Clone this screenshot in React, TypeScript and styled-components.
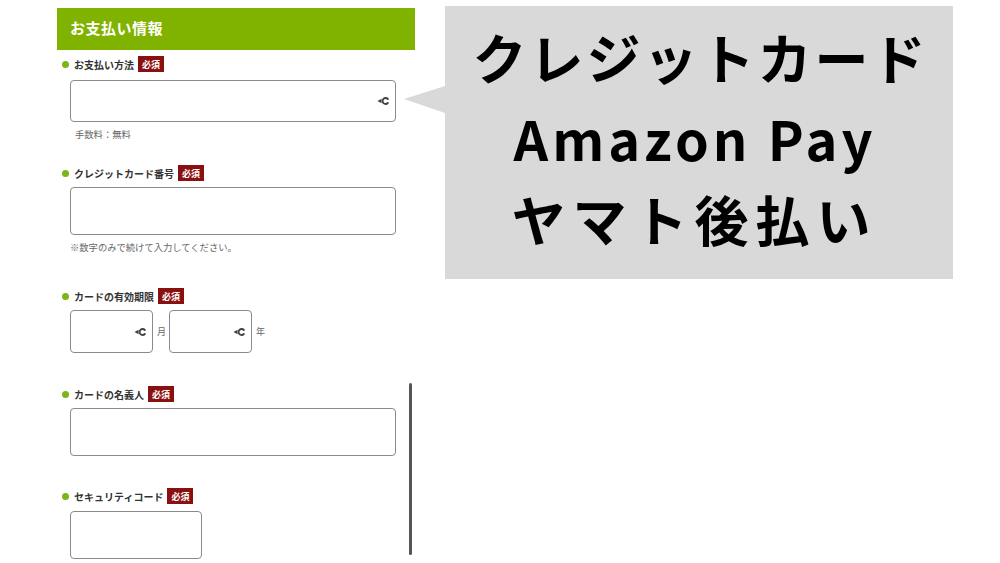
import React from "react";
import styled, { createGlobalStyle } from "styled-components";

const Global = createGlobalStyle`
  html, body { margin: 0; padding: 0; background: #fff; }
  body { font-family: "Noto Sans CJK JP", "Noto Sans", sans-serif; }
  #root { width: 1000px; height: 563px; overflow: hidden; }
`;

const Page = styled.div`
  display: flex;
  align-items: flex-start;
  width: 1000px;
  height: 563px;
`;

const Panel = styled.div`
  position: relative;
  width: 358px;
  margin: 8px 0 0 57px;
  display: flex;
  flex-direction: column;
`;

const Header = styled.div`
  height: 42px;
  background: #80b300;
  color: #fff;
  font-weight: 700;
  font-size: 15px;
  display: flex;
  align-items: center;
  padding-left: 13px;
  padding-bottom: 3px;
  box-sizing: border-box;
  letter-spacing: 0.5px;
`;

const Group = styled.div<{ $top: number }>`
  display: flex;
  flex-direction: column;
  margin-top: ${(p) => p.$top}px;
`;

const LabelRow = styled.div`
  display: flex;
  align-items: center;
  height: 16px;
  padding-left: 5px;
  gap: 4px;
`;

const Dot = styled.span`
  width: 7px;
  height: 7px;
  border-radius: 50%;
  background: #7cb518;
  margin-right: 1px;
`;

const LabelText = styled.span`
  font-size: 10px;
  font-weight: 700;
  color: #333;
`;

const Badge = styled.span`
  background: #8a1010;
  color: #fff;
  font-size: 9px;
  font-weight: 700;
  height: 16px;
  padding: 0 4px;
  display: flex;
  align-items: center;
`;

const Field = styled.div<{ $w: number; $h: number; $mt?: number }>`
  box-sizing: border-box;
  width: ${(p) => p.$w}px;
  height: ${(p) => p.$h}px;
  border: 1.5px solid #8a8a8a;
  border-radius: 4px;
  background: #fff;
  margin-left: 13px;
  margin-top: ${(p) => p.$mt ?? 0}px;
  display: flex;
  align-items: center;
  justify-content: flex-end;
  padding-right: 6px;
`;

const Note = styled.div<{ $pl?: number }>`
  font-size: 9.3px;
  color: #666;
  margin-top: 6px;
  padding-left: ${(p) => p.$pl ?? 18}px;
  height: 12px;
  line-height: 12px;
`;

const DateRow = styled.div`
  display: flex;
  align-items: center;
  margin-top: 6px;
  margin-left: 13px;
`;

const Unit = styled.span`
  font-size: 9px;
  color: #666;
  margin: 0 3px 0 4px;
`;

const DateSelect = styled(Field)`
  margin-left: 0;
`;

const Scrollbar = styled.div`
  position: absolute;
  left: 352px;
  top: 375px;
  width: 3px;
  height: 172px;
  background: #555;
  border-radius: 2px;
`;

const Callout = styled.div`
  position: relative;
  box-sizing: border-box;
  margin: 6px 0 0 30px;
  width: 508px;
  height: 273px;
  padding-top: 10px;
  background: #d9d9d9;
  display: flex;
  flex-direction: column;
  align-items: center;
  &::before {
    content: "";
    position: absolute;
    left: -41px;
    top: 80px;
    border-style: solid;
    border-width: 13px 41px 14px 0;
    border-color: transparent #d9d9d9 transparent transparent;
  }
`;

const BigLine = styled.div<{ $ls: number; $shift?: number }>`
  font-family: "Noto Sans CJK JP", "Noto Sans", sans-serif;
  font-weight: 700;
  font-size: 54px;
  line-height: 81px;
  color: #000;
  letter-spacing: ${(p) => p.$ls}px;
  margin-right: ${(p) => (p.$shift ?? 0) * 2 - p.$ls}px;
`;

const SelectIcon = () => (
  <svg width="12" height="10" viewBox="0 0 12 10">
    <path d="M0.5 5 L4.5 2.8 L4.5 7.2 Z" fill="#444" />
    <path d="M10.8 3 A3 3 0 1 0 10.8 7" stroke="#444" strokeWidth="1.9" fill="none" strokeLinecap="round" />
  </svg>
);

export default function App() {
  return (
    <>
      <Global />
      <Page>
        <Panel>
          <Header>お支払い情報</Header>
          <Group $top={6}>
            <LabelRow>
              <Dot />
              <LabelText>お支払い方法</LabelText>
              <Badge>必須</Badge>
            </LabelRow>
            <Field $w={326} $h={42} $mt={8}>
              <SelectIcon />
            </Field>
            <Note>手数料：無料</Note>
          </Group>
          <Group $top={25}>
            <LabelRow>
              <Dot />
              <LabelText>クレジットカード番号</LabelText>
              <Badge>必須</Badge>
            </LabelRow>
            <Field $w={326} $h={48} $mt={6} />
            <Note $pl={13}>※数字のみで続けて入力してください。</Note>
          </Group>
          <Group $top={35}>
            <LabelRow>
              <Dot />
              <LabelText>カードの有効期限</LabelText>
              <Badge>必須</Badge>
            </LabelRow>
            <DateRow>
              <DateSelect $w={83} $h={43}>
                <SelectIcon />
              </DateSelect>
              <Unit>月</Unit>
              <DateSelect $w={83} $h={43}>
                <SelectIcon />
              </DateSelect>
              <Unit>年</Unit>
            </DateRow>
          </Group>
          <Group $top={33}>
            <LabelRow>
              <Dot />
              <LabelText>カードの名義人</LabelText>
              <Badge>必須</Badge>
            </LabelRow>
            <Field $w={326} $h={48} $mt={6} />
          </Group>
          <Group $top={32}>
            <LabelRow>
              <Dot />
              <LabelText>セキュリティコード</LabelText>
              <Badge>必須</Badge>
            </LabelRow>
            <Field $w={132} $h={48} $mt={7} />
          </Group>
          <Scrollbar />
        </Panel>
        <Callout>
          <BigLine $ls={3}>クレジットカード</BigLine>
          <BigLine $ls={4} $shift={6}>Amazon Pay</BigLine>
          <BigLine $ls={7} $shift={8}>ヤマト後払い</BigLine>
        </Callout>
      </Page>
    </>
  );
}
